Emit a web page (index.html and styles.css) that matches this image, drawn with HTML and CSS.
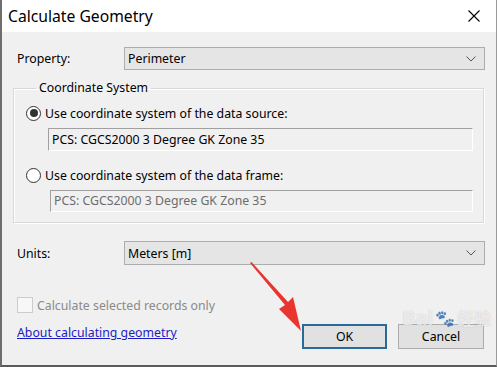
FILE: index.html
```html
<!DOCTYPE html>
<html>
<head>
<meta charset="utf-8">
<link rel="stylesheet" href="styles.css">
</head>
<body>
<div class="win">
  <div class="titlebar">
    <span class="title">Calculate Geometry</span>
    <svg class="close" width="12" height="12" viewBox="0 0 12 12"><path d="M0.5 0.5 L11.5 11.5 M11.5 0.5 L0.5 11.5" stroke="#000" stroke-width="1.1" fill="none"/></svg>
  </div>
  <div class="body">
    <div class="row prop">
      <span class="lbl">Property:</span>
      <div class="select"><span>Perimeter</span><svg class="chev" width="10" height="6" viewBox="0 0 10 6"><path d="M0.5 0.5 L5 5 L9.5 0.5" stroke="#555" stroke-width="1" fill="none"/></svg></div>
    </div>
    <fieldset class="group">
      <legend>Coordinate System</legend>
      <div class="radio-row"><span class="radio checked"></span><span>Use coordinate system of the data source:</span></div>
      <div class="tb">PCS: CGCS2000 3 Degree GK Zone 35</div>
      <div class="radio-row second"><span class="radio"></span><span>Use coordinate system of the data frame:</span></div>
      <div class="tb disabled">PCS: CGCS2000 3 Degree GK Zone 35</div>
    </fieldset>
    <div class="row units">
      <span class="lbl">Units:</span>
      <div class="select"><span>Meters [m]</span><svg class="chev" width="10" height="6" viewBox="0 0 10 6"><path d="M0.5 0.5 L5 5 L9.5 0.5" stroke="#555" stroke-width="1" fill="none"/></svg></div>
    </div>
    <div class="check-row"><span class="check"></span><span>Calculate selected records only</span></div>
    <div class="footer">
      <a class="link" href="#">About calculating geometry</a>
      <div class="buttons">
        <div class="btn ok">OK</div>
        <div class="btn">Cancel</div>
      </div>
    </div>
  </div>
  <div class="watermark"><span class="wm-bai">Bai</span><span class="wm-paw">&#x1F43E;</span><span class="wm-cn">经验</span></div>
  <svg class="arrow" width="60" height="72" viewBox="0 0 60 72"><polygon points="0,1 1.5,0 38,40 43,35 51,69 29,47 35,43" fill="#e8352e"/></svg>
</div>
</body>
</html>
```

FILE: styles.css
```css
html, body { margin: 0; padding: 0; }
body {
  font-family: "Noto Sans", "Open Sans", sans-serif;
  font-size: 12.3px;
  color: #000;
  background: #f0f0f0;
}
.win {
  position: relative;
  width: 497px;
  height: 367px;
  box-sizing: border-box;
  border-left: 2px solid #6e6e6e;
  border-right: 1px solid #9a9a9a;
  border-bottom: 2px solid #5a5a5a;
  background: #f0f0f0;
  overflow: hidden;
}
.titlebar {
  height: 32px;
  background: #fff;
  display: flex;
  align-items: center;
  justify-content: space-between;
  padding: 0 16px 0 6px;
}
.title { font-size: 15.7px; line-height: 20px; }
.close { display: block; }
.body {
  padding: 15px 11px 0 11px;
}
.row { display: flex; align-items: center; }
.lbl { width: 107px; padding-left: 4px; flex: none; }
.select {
  flex: 1;
  height: 23px;
  box-sizing: border-box;
  background: #e5e5e5;
  border: 1px solid #adadad;
  display: flex;
  align-items: center;
  justify-content: space-between;
  padding: 0 8px 0 3px;
}
.chev { display: block; }
.units { margin-top: 18px; }
.units .select { height: 24px; }
.group {
  margin: 9px 1px 0 0;
  padding: 7px 10px 10px 12px;
  border: 1px solid #d8d8d8;
  box-shadow: inset 1px 1px 0 #fff, 1px 1px 0 #fff;
}
.group legend {
  margin-left: 10px;
  padding: 0 3px;
  line-height: 18px;
}
.radio-row {
  display: flex;
  align-items: center;
  gap: 4px;
  height: 18px;
}
.radio-row.second { margin-top: 15px; }
.radio {
  width: 15px;
  height: 15px;
  box-sizing: border-box;
  border: 1px solid #333;
  border-radius: 50%;
  background: #fff;
  display: flex;
  align-items: center;
  justify-content: center;
}
.radio.checked::after {
  content: "";
  width: 8px;
  height: 8px;
  border-radius: 50%;
  background: #333;
}
.tb {
  margin: 6px 0 0 22px;
  height: 23px;
  box-sizing: border-box;
  border-top: 1px solid #a0a0a0;
  border-left: 1px solid #a0a0a0;
  border-right: 1px solid #fff;
  border-bottom: 1px solid #fff;
  background: #f0f0f0;
  padding-left: 3px;
  line-height: 21px;
}
.tb.disabled { height: 22px; color: #6d6d6d; margin-left: 24px; line-height: 20px; }
.check-row {
  margin-top: 32px;
  display: flex;
  align-items: center;
  gap: 4px;
  height: 16px;
  padding-left: 4px;
  color: #8a8a8a;
}
.check {
  width: 16px;
  height: 16px;
  box-sizing: border-box;
  border: 1px solid #cccccc;
  background: #f7f7f7;
}
.footer {
  margin-top: 11px;
  display: flex;
  justify-content: space-between;
  align-items: flex-start;
}
.link {
  padding-left: 4px;
  line-height: 18px;
  color: #1c1cc4;
  text-decoration: underline;
}
.buttons {
  display: flex;
  gap: 11px;
  margin-top: 0;
  margin-right: 1px;
}
.btn {
  width: 86px;
  height: 25px;
  box-sizing: border-box;
  border: 1px solid #adadad;
  background: #e1e1e1;
  display: flex;
  align-items: center;
  justify-content: center;
}
.btn.ok { width: 85px; border: 2px solid #2a6a98; }
.watermark {
  position: absolute;
  left: 400px;
  top: 304px;
  display: flex;
  align-items: center;
  gap: 2px;
  color: rgba(255,255,255,0.7);
  text-shadow: 0 0 1px rgba(120,120,120,0.45);
  font-size: 20px;
  font-weight: bold;
  pointer-events: none;
}
.wm-paw { font-size: 16px; }
.wm-cn { font-family: "Noto Sans CJK SC", sans-serif; font-size: 17px; }
.arrow {
  position: absolute;
  left: 248px;
  top: 262px;
}
```
